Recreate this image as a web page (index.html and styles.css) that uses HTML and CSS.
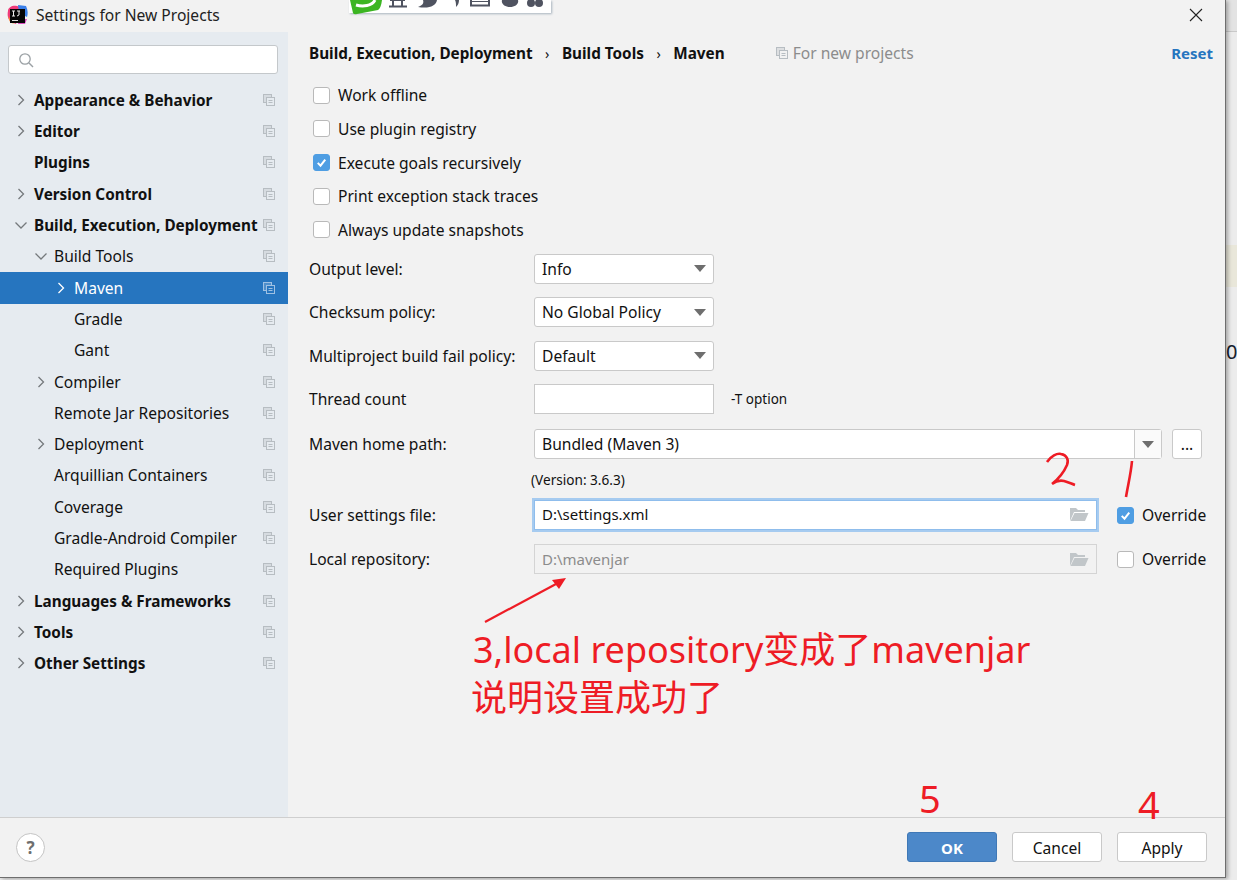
FILE: index.html
```html
<!DOCTYPE html>
<html lang="en">
<head>
    <meta charset="UTF-8">
    <title>Settings for New Projects</title>
    <link rel="stylesheet" href="styles.css">
</head>
<body>
    <svg class="defs" width="0" height="0">
        <symbol id="copy" viewBox="0 0 12 12">
            <rect x="0.5" y="0.5" width="8" height="8" fill="currentColor" fill-opacity="0.35" stroke="currentColor"/>
            <rect class="copy-front" x="3.5" y="3.5" width="8" height="8" stroke="currentColor"/>
            <path d="M5.5 6.5 H9.5 M5.5 8.5 H9.5" stroke="currentColor" fill="none"/>
        </symbol>
        <symbol id="right" viewBox="0 0 10 12"><path d="M2.5 1 L7.5 6 L2.5 11"/></symbol>
        <symbol id="down" viewBox="0 0 14 12"><path d="M1.5 3.5 L7 9 L12.5 3.5"/></symbol>
        <symbol id="folder" viewBox="0 0 20 16">
            <path d="M1 15 V2 H7 L9 4 H16 V6 H5 Z" fill="#c1c6c9"/>
            <path d="M5.5 7 H19.5 L16 15 H1.5 Z" fill="#c1c6c9"/>
        </symbol>
    </svg>

    <div class="behind">
        <div class="behind-head"></div>
        <div class="behind-row"></div>
        <div class="behind-mark">0</div>
    </div>

    <div class="dialog">
        <header class="titlebar">
            <svg class="app-logo" width="21" height="20" viewBox="0 0 21 20">
                <path d="M1 6 C1 2 6 0 10 1 L14 2 L9 19 L4 17 C1 15 0 10 1 6 Z" fill="#ef3a78"/>
                <path d="M11 0 L19 1 C21 5 21 9 20 12 L12 8 Z" fill="#3a7fe8"/>
                <path d="M1 11 L7 19 L3 17 Z" fill="#f79a22"/>
                <path d="M12 14 H20 L18 19 H11 Z" fill="#d94cc0"/>
                <rect x="3" y="4" width="15" height="14" fill="#050505"/>
                <rect x="5" y="15" width="6" height="1" fill="#ddd"/>
                <path d="M5 6 H8 M6.5 6 V11 M5 11 H8 M10 6 H13 M12 6 V10 L10 11" stroke="#eee" fill="none"/>
            </svg>
            <span class="title">Settings for New Projects</span>
            <svg class="close" width="14" height="14" viewBox="0 0 14 14"><path d="M1 1 L13 13 M13 1 L1 13" stroke="#222" stroke-width="1.1" fill="none"/></svg>
        </header>

        <div class="toolbar-peek">
            <svg width="203" height="15" viewBox="0 0 203 15">
                <path d="M1 0 L4 13 Q5 15 8 14 L29 10 Q32 8 33 0 Z" fill="#3cb522"/>
                <path d="M7 5 C14 7 23 6 26 0" stroke="#fff" stroke-width="3" fill="none"/>
                <path d="M44 0 V6 M53 0 V6 M41 0 H56 M40 6.5 H58" stroke="#4f5360" stroke-width="2" fill="none"/>
                <path d="M74 0 H88 C87 6 80 9 69 7 C74 5 75 3 74 0 Z" fill="#4f5360"/>
                <path d="M106 0 H110 C110 3 109 5 107 7 C107 4 107 2 106 0 Z" fill="#4f5360"/>
                <path d="M122 0 V5.5 H140 V0" fill="none" stroke="#4f5360" stroke-width="2"/>
                <path d="M122 1.5 H140" stroke="#4f5360" stroke-width="1"/>
                <path d="M153 0 H169 C170 4 166 7 161 7 C156 7 152 4 153 0 Z" fill="#4f5360"/>
                <circle cx="182" cy="3" r="4" fill="#4f5360"/>
                <circle cx="190" cy="3" r="4" fill="#4f5360"/>
            </svg>
        </div>

        <div class="body">
            <aside class="sidebar">
                <div class="search">
                    <svg width="16" height="16" viewBox="0 0 16 16"><circle cx="7" cy="7" r="5.2" fill="none" stroke="#9aa0a4" stroke-width="1.3"/><path d="M11 11 L15 15" stroke="#9aa0a4" stroke-width="1.5"/></svg>
                </div>
                <ul class="tree">
                    <li class="node top"><svg class="arrow"><use href="#right"/></svg><span>Appearance &amp; Behavior</span><svg class="copy"><use href="#copy"/></svg></li>
                    <li class="node top"><svg class="arrow"><use href="#right"/></svg><span>Editor</span><svg class="copy"><use href="#copy"/></svg></li>
                    <li class="node top"><b class="arrow"></b><span>Plugins</span><svg class="copy"><use href="#copy"/></svg></li>
                    <li class="node top"><svg class="arrow"><use href="#right"/></svg><span>Version Control</span><svg class="copy"><use href="#copy"/></svg></li>
                    <li class="node top"><svg class="arrow"><use href="#down"/></svg><span>Build, Execution, Deployment</span><svg class="copy"><use href="#copy"/></svg></li>
                    <li class="node l1"><svg class="arrow"><use href="#down"/></svg><span>Build Tools</span><svg class="copy"><use href="#copy"/></svg></li>
                    <li class="node l2 selected"><svg class="arrow"><use href="#right"/></svg><span>Maven</span><svg class="copy"><use href="#copy"/></svg></li>
                    <li class="node l2"><b class="arrow"></b><span>Gradle</span><svg class="copy"><use href="#copy"/></svg></li>
                    <li class="node l2"><b class="arrow"></b><span>Gant</span><svg class="copy"><use href="#copy"/></svg></li>
                    <li class="node l1"><svg class="arrow"><use href="#right"/></svg><span>Compiler</span><svg class="copy"><use href="#copy"/></svg></li>
                    <li class="node l1"><b class="arrow"></b><span>Remote Jar Repositories</span><svg class="copy"><use href="#copy"/></svg></li>
                    <li class="node l1"><svg class="arrow"><use href="#right"/></svg><span>Deployment</span><svg class="copy"><use href="#copy"/></svg></li>
                    <li class="node l1"><b class="arrow"></b><span>Arquillian Containers</span><svg class="copy"><use href="#copy"/></svg></li>
                    <li class="node l1"><b class="arrow"></b><span>Coverage</span><svg class="copy"><use href="#copy"/></svg></li>
                    <li class="node l1"><b class="arrow"></b><span>Gradle-Android Compiler</span><svg class="copy"><use href="#copy"/></svg></li>
                    <li class="node l1"><b class="arrow"></b><span>Required Plugins</span><svg class="copy"><use href="#copy"/></svg></li>
                    <li class="node top"><svg class="arrow"><use href="#right"/></svg><span>Languages &amp; Frameworks</span><svg class="copy"><use href="#copy"/></svg></li>
                    <li class="node top"><svg class="arrow"><use href="#right"/></svg><span>Tools</span><svg class="copy"><use href="#copy"/></svg></li>
                    <li class="node top"><svg class="arrow"><use href="#right"/></svg><span>Other Settings</span><svg class="copy"><use href="#copy"/></svg></li>
                </ul>
            </aside>

            <main class="content">
                <div class="crumbs">
                    <b>Build, Execution, Deployment</b><em>›</em><b>Build Tools</b><em>›</em><b>Maven</b>
                    <span class="scope"><svg class="copy"><use href="#copy"/></svg>For new projects</span>
                    <a class="reset">Reset</a>
                </div>

                <div class="checks">
                    <label class="check"><i class="box"></i>Work offline</label>
                    <label class="check"><i class="box"></i>Use plugin registry</label>
                    <label class="check"><i class="box on"><svg viewBox="0 0 18 18"><path d="M4.5 9.5 L7.8 12.8 L13.5 5.5"/></svg></i>Execute goals recursively</label>
                    <label class="check"><i class="box"></i>Print exception stack traces</label>
                    <label class="check"><i class="box"></i>Always update snapshots</label>
                </div>

                <div class="form">
                    <div class="row r1"><span class="lbl">Output level:</span><div class="combo"><span>Info</span><i class="tri"></i></div></div>
                    <div class="row r1"><span class="lbl">Checksum policy:</span><div class="combo"><span>No Global Policy</span><i class="tri"></i></div></div>
                    <div class="row r1"><span class="lbl">Multiproject build fail policy:</span><div class="combo"><span>Default</span><i class="tri"></i></div></div>
                    <div class="row r1"><span class="lbl">Thread count</span><div class="field short"></div><span class="hint">-T option</span></div>
                    <div class="row r2">
                        <span class="lbl">Maven home path:</span>
                        <div class="combo wide"><span>Bundled (Maven 3)</span><span class="split"><i class="tri"></i></span></div>
                        <div class="dots">...</div>
                    </div>
                    <div class="version">(Version: 3.6.3)</div>
                    <div class="row r3">
                        <span class="lbl">User settings file:</span>
                        <div class="field path focus"><span>D:\settings.xml</span><svg class="folder"><use href="#folder"/></svg></div>
                        <label class="check tight"><i class="box on"><svg viewBox="0 0 18 18"><path d="M4.5 9.5 L7.8 12.8 L13.5 5.5"/></svg></i>Override</label>
                    </div>
                    <div class="row r3">
                        <span class="lbl">Local repository:</span>
                        <div class="field path off"><span>D:\mavenjar</span><svg class="folder"><use href="#folder"/></svg></div>
                        <label class="check tight"><i class="box"></i>Override</label>
                    </div>
                </div>
            </main>
        </div>

        <footer class="footer">
            <div class="help">?</div>
            <div class="buttons">
                <div class="btn primary">OK</div>
                <div class="btn">Cancel</div>
                <div class="btn">Apply</div>
            </div>
        </footer>

        <!-- red notes drawn over the screenshot -->
        <svg class="ink" width="1237" height="880" viewBox="0 0 1237 880">
            <path d="M485 622 L556 584" stroke="#ee1c25" stroke-width="2.2" fill="none"/>
            <path d="M566 578 L552 580 L559 589 Z" fill="#ee1c25"/>
            <path d="M1047 462 C1051 456 1057 453 1061 454 C1067 455 1069 460 1067 465 C1064 472 1057 480 1052 484 C1056 481 1060 480 1064 481 C1068 482 1072 484 1075 485" stroke="#ee1c25" stroke-width="2.6" fill="none"/>
            <path d="M1132 461 C1131 473 1128 485 1126 497" stroke="#ee1c25" stroke-width="2.6" fill="none"/>
        </svg>
        <div class="note">3,local repository变成了mavenjar<br><span class="note-cn">说明设置成功了</span></div>
        <span class="num n5">5</span>
        <span class="num n4">4</span>
    </div>
</body>
</html>
```

FILE: styles.css
```css
* {
    box-sizing: border-box;
}
html, body {
    margin: 0;
    height: 100%;
    overflow: hidden;
}
body {
    position: relative;
    background: #ececec;
    font-family: "Noto Sans", "Noto Sans CJK SC", sans-serif;
    font-size: 15.6px;
    color: #111;
}
.defs {
    position: absolute;
}
.behind-head {
    position: absolute;
    left: 1226px;
    top: 0;
    width: 11px;
    height: 32px;
    background: #e3e3e3;
    border-bottom: 1px solid #c9c9c9;
}
.behind-row {
    position: absolute;
    left: 1226px;
    top: 245px;
    width: 11px;
    height: 42px;
    background: #e9e7da;
}
.behind-mark {
    position: absolute;
    left: 1226px;
    top: 338px;
    font-size: 20px;
    color: #16202c;
}
.dialog {
    position: relative;
    width: 1226px;
    height: 878px;
    background: #f2f2f2;
    border-right: 1px solid #6e6e6e;
    border-bottom: 1px solid #6e6e6e;
    box-shadow: 2px 1px 4px rgba(0, 0, 0, 0.3);
    display: flex;
    flex-direction: column;
}
.titlebar {
    height: 32px;
    flex: none;
    display: flex;
    align-items: center;
    padding: 0 22px 2px 7px;
}
.app-logo {
    margin-right: 8px;
}
.title {
    flex: 1;
    color: #222;
}
.toolbar-peek {
    position: absolute;
    left: 349px;
    top: 0;
    width: 202px;
    height: 13px;
    background: #fff;
    box-shadow: 1px 1px 2px #a9b4bf;
    line-height: 0;
}
.toolbar-peek svg {
    overflow: visible;
}
.body {
    flex: 1;
    display: flex;
    min-height: 0;
}
.sidebar {
    width: 288px;
    flex: none;
    background: #e6ebf0;
    padding-top: 13px;
}
.search {
    margin: 0 10px 0 8px;
    height: 29px;
    background: #fff;
    border: 1px solid #c4c8cb;
    border-radius: 3px;
    display: flex;
    align-items: center;
    padding-left: 9px;
}
.tree {
    list-style: none;
    margin: 10.2px 0 0;
    padding: 0;
}
.node {
    height: 31.3px;
    display: flex;
    align-items: center;
    padding-right: 13px;
}
.node span {
    flex: 1;
    white-space: nowrap;
}
.top {
    font-weight: 700;
    font-size: 15.3px;
    padding-left: 14px;
}
.l1 {
    padding-left: 34px;
}
.l2 {
    padding-left: 54px;
}
.arrow {
    display: block;
    width: 14px;
    height: 12px;
    margin-right: 6px;
    flex: none;
    fill: none;
    stroke: #75797c;
    stroke-width: 1.3;
}
.selected {
    background: #2675bf;
    color: #fff;
    box-shadow: 0 1px 0 #2675bf;
    position: relative;
}
.selected .arrow {
    stroke: #fff;
}
.copy {
    width: 12px;
    height: 12px;
    flex: none;
    color: #b7bdc2;
    --copy-bg: #e6ebf0;
}
.copy-front {
    fill: var(--copy-bg);
}
.selected .copy {
    color: #9fc1e3;
    --copy-bg: #2675bf;
}
.content {
    flex: 1;
    position: relative;
    padding: 0 12px 0 21px;
}
.crumbs {
    height: 42px;
    display: flex;
    align-items: center;
    white-space: nowrap;
}
.crumbs b {
    font-size: 15.3px;
}
.crumbs em {
    font-style: normal;
    margin: 0 12.5px;
    font-size: 14px;
}
.scope {
    margin-left: 51px;
    margin-right: auto;
    color: #8c8c8c;
    display: flex;
    align-items: center;
}
.scope .copy {
    margin-right: 5px;
    --copy-bg: #f2f2f2;
}
.reset {
    font-weight: 700;
    font-size: 15px;
    color: #2675bf;
}
.checks {
    padding: 4.4px 0 0 4px;
}
.check {
    display: flex;
    align-items: center;
    height: 33.7px;
}
.box {
    width: 17px;
    height: 17px;
    margin-right: 8px;
    flex: none;
    background: #fff;
    border: 1px solid #b9b9b9;
    border-radius: 3px;
}
.box.on {
    background: #4f9ee3;
    border-color: #4f9ee3;
}
.box svg {
    display: block;
    width: 15px;
    height: 15px;
    fill: none;
    stroke: #fff;
    stroke-width: 2.4;
}
.form {
    padding-top: 0.3px;
}
.row {
    display: flex;
    align-items: center;
}
.r1 {
    height: 43.5px;
}
.r2 {
    height: 46px;
}
.r3 {
    height: 44px;
}
.lbl {
    width: 225px;
    flex: none;
    white-space: nowrap;
}
.combo, .field {
    height: 30px;
    background: #fff;
    border: 1px solid #c9c9c9;
    border-radius: 3px;
    display: flex;
    align-items: center;
    padding-left: 7px;
}
.combo {
    width: 180px;
    justify-content: space-between;
    padding-right: 7px;
}
.tri {
    width: 0;
    height: 0;
    border-left: 6px solid transparent;
    border-right: 6px solid transparent;
    border-top: 7px solid #6e6e6e;
}
.field.short {
    width: 180px;
    border-radius: 0;
}
.hint {
    margin-left: 17px;
    font-size: 13.5px;
}
.combo.wide {
    width: 628px;
    padding-right: 0;
}
.split {
    width: 27px;
    height: 28px;
    display: flex;
    align-items: center;
    justify-content: center;
    background: #fafafa;
    border-left: 1px solid #c9c9c9;
}
.dots {
    width: 30px;
    height: 30px;
    margin-left: 10px;
    background: #fff;
    border: 1px solid #c9c9c9;
    border-radius: 3px;
    text-align: center;
    line-height: 28px;
}
.version {
    height: 26.3px;
    margin-left: 222px;
    display: flex;
    align-items: center;
    padding-bottom: 2px;
    font-size: 13.6px;
}
.path {
    width: 563px;
    justify-content: space-between;
    padding-right: 7px;
    border-radius: 0;
    font-size: 15px;
}
.path.focus {
    border: 1px solid #8fbdec;
    box-shadow: 0 0 0 2px #a6cbf0;
    padding-bottom: 2px;
}
.path.off {
    background: #f2f2f2;
    color: #8c8c8c;
    border-color: #d4d4d4;
}
.folder {
    width: 20px;
    height: 16px;
}
.check.tight {
    margin-left: 20px;
    white-space: nowrap;
}
.ink {
    position: absolute;
    left: 0;
    top: 0;
    pointer-events: none;
}
.note {
    position: absolute;
    left: 473px;
    top: 626px;
    font-size: 36px;
    line-height: 48px;
    color: #ee1c25;
    white-space: nowrap;
}
.note-cn {
    margin-left: -2px;
}
.num {
    position: absolute;
    font-size: 38px;
    color: #ee1c25;
    line-height: 1;
}
.n5 {
    left: 919px;
    top: 779px;
}
.n4 {
    left: 1138px;
    top: 785px;
}
.footer {
    height: 60px;
    flex: none;
    border-top: 1px solid #cfcfcf;
    display: flex;
    align-items: center;
    justify-content: space-between;
    padding: 0 18px 0 16px;
}
.help {
    width: 29px;
    height: 29px;
    border: 1px solid #c4c4c4;
    border-radius: 50%;
    background: #fff;
    text-align: center;
    line-height: 27px;
    font-weight: 700;
    font-size: 17px;
    color: #6e6e6e;
}
.buttons {
    display: flex;
    gap: 15px;
    margin-top: -2px;
}
.btn {
    width: 90px;
    height: 30px;
    background: #fff;
    border: 1px solid #c9c9c9;
    border-radius: 3px;
    text-align: center;
    line-height: 30px;
}
.btn.primary {
    background: #4c88c9;
    border-color: #3f78b6;
    color: #fff;
    font-weight: 700;
    font-size: 15px;
}
```
